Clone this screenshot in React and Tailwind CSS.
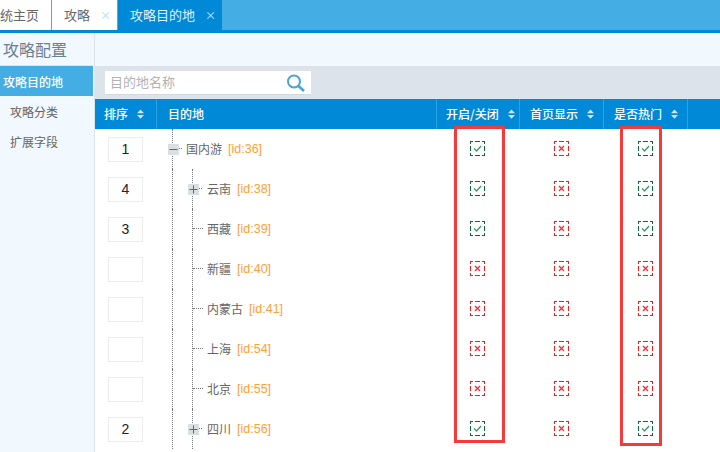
const font = { fontFamily: '"Noto Sans CJK SC", sans-serif' };

function Sort() {
  return (
    <svg width="9" height="10" viewBox="0 0 9 10" className="shrink-0" fill="#cde7f8">
      <path d="M4.5 0.5 L8 4.2 H1 Z" />
      <path d="M4.5 9.8 L8 6 H1 Z" />
    </svg>
  );
}

function Check({ on }) {
  const c = on ? "#0a6b3a" : "#f01c1c";
  return (
    <svg width="15" height="15" viewBox="0 0 15 15" fill="none" className="block -translate-y-px">
      <path
        shapeRendering="crispEdges"
        stroke={c}
        d="M0.5 3 V0.5 H3 M5 0.5 H10 M12 0.5 H14.5 V3 M14.5 5 V10 M14.5 12 V14.5 H12 M10 14.5 H5 M3 14.5 H0.5 V12 M0.5 10 V5"
      />
      {on ? (
        <path d="M4 7.5 L6.5 10 L11 5" stroke="#3f9a68" strokeWidth="1.3" />
      ) : (
        <path d="M5 5 L10 10 M10 5 L5 10" stroke="#f0303a" strokeWidth="1.4" />
      )}
    </svg>
  );
}

function Expander({ open }) {
  return (
    <span className="absolute top-[15px] -left-[5px] flex h-[11px] w-[11px] items-center justify-center bg-[#dcdfe2]">
      <svg width="9" height="9" viewBox="0 0 9 9" stroke="#666" fill="none">
        <path d="M0.5 4.5 H8.5" />
        {!open && <path d="M4.5 0.5 V8.5" />}
      </svg>
    </span>
  );
}

const rows = [
  { o: "1", n: "国内游", id: 36, a: true, c: true, lvl: 0, exp: "open" },
  { o: "4", n: "云南", id: 38, a: true, c: true, lvl: 1, exp: "closed" },
  { o: "3", n: "西藏", id: 39, a: true, c: true, lvl: 1 },
  { o: "", n: "新疆", id: 40, a: false, c: false, lvl: 1 },
  { o: "", n: "内蒙古", id: 41, a: false, c: false, lvl: 1 },
  { o: "", n: "上海", id: 54, a: false, c: false, lvl: 1 },
  { o: "", n: "北京", id: 55, a: false, c: false, lvl: 1 },
  { o: "2", n: "四川", id: 56, a: true, c: true, lvl: 1, exp: "closed" },
];

const gridCols = "grid grid-cols-[62px_280px_83px_84px_84px_1fr]";

function Head({ label, pad, gapCls }) {
  return (
    <div className={`flex h-full items-center border-r border-[#2ba0e2] ${pad} ${gapCls}`}>
      <span className="font-medium">{label}</span>
      <Sort />
    </div>
  );
}

function Row({ r }) {
  return (
    <div className={`${gridCols} h-10`}>
      <div className="flex items-center pl-[13px]">
        <div className="flex h-[25px] w-[35px] items-center justify-center border border-[#ececec] bg-white text-[14px] text-[#222]" style={{ fontFamily: '"Liberation Sans", sans-serif' }}>
          {r.o}
        </div>
      </div>
      <div className="flex h-10 pl-[15px]">
        <div className="relative h-10 w-5 shrink-0 border-l border-dotted border-[#777]">
          {r.lvl === 0 && r.exp && <Expander open />}
          {r.lvl === 0 && <span className="absolute top-[19px] left-[6px] w-[3px] border-t border-dotted border-[#777]" />}
        </div>
        {r.lvl === 1 && (
          <div className="relative h-10 w-[15px] shrink-0 border-l border-dotted border-[#777]">
            {r.exp && <Expander />}
            <span className={`absolute top-[19px] border-t border-dotted border-[#777] ${r.exp ? "left-[6px] w-[3px]" : "left-0 w-[10px]"}`} />
          </div>
        )}
        <div className={`flex h-10 items-center text-xs text-[#666] ${r.lvl === 0 ? "-ml-[6px]" : ""}`}>
          <span>{r.n}</span>
          <span className="ml-[6px] text-[12.5px] text-[#ff9e36]" style={{ fontFamily: '"Liberation Sans", sans-serif' }}>[id:{r.id}]</span>
        </div>
      </div>
      <div className="flex items-center justify-center pr-[3px]"><Check on={r.a} /></div>
      <div className="flex items-center justify-center pr-[2px]"><Check on={false} /></div>
      <div className="flex items-center justify-center pr-[2px]"><Check on={r.c} /></div>
      <div />
    </div>
  );
}

export default function App() {
  return (
    <div className="flex h-[452px] w-[720px] flex-col overflow-hidden bg-white" style={font}>
      <div className="flex h-[30px] shrink-0 bg-[#44ade3] text-[13px]">
        <div className="flex w-[52px] items-center justify-end border-r border-[#44ade3] bg-white pr-[12px] text-[#666]">统主页</div>
        <div className="flex w-[66px] items-center border-r border-[#44ade3] bg-white pl-[12px] text-[#666]">
          <span>攻略</span>
          <span className="ml-[10px] text-[11px] text-[#a9d8f2]">×</span>
        </div>
        <div className="flex w-[104px] items-center bg-[#0089d6] pl-[12px] text-[#dff2ff]">
          <span>攻略目的地</span>
          <span className="ml-[10px] text-[11px] text-[#d5edfb]">×</span>
        </div>
      </div>
      <div className="h-[3px] shrink-0 bg-[#0089d6]" />
      <div className="flex min-h-0 flex-1">
        <aside className="flex w-[95px] shrink-0 flex-col border-r border-[#dbe5ee] bg-[#f1f8fe]">
          <div className="flex h-[33px] items-center border-b border-[#dbe5ee] pl-[3px] text-base text-[#6d7f93]">攻略配置</div>
          <div className="flex h-[30px] w-[93px] items-center bg-[#44ade3] pt-[1px] pl-[3px] text-xs font-medium text-white">攻略目的地</div>
          <div className="flex h-[30px] items-center pt-[2px] pl-[10px] text-xs text-[#666]">攻略分类</div>
          <div className="flex h-[30px] items-center pt-[2px] pl-[10px] text-xs text-[#666]">扩展字段</div>
        </aside>
        <main className="flex min-w-0 flex-1 flex-col">
          <div className="h-[33px] shrink-0 bg-[#f1f8fe]" />
          <div className="flex h-[33px] shrink-0 items-center bg-[#dde3ea] pl-[10px]">
            <div className="flex h-[24px] w-[206px] items-center justify-between border-b border-[#d3d8de] bg-white pr-[6px] pl-[5px] text-[13px] text-[#b3b3b3]">
              <span>目的地名称</span>
              <svg width="19" height="18" viewBox="0 0 19 18" fill="none" stroke="#4ba3d9" strokeWidth="2" className="translate-y-[1px]">
                <circle cx="8" cy="7.5" r="6" />
                <path d="M12.5 12 L18 17" strokeWidth="2.6" />
              </svg>
            </div>
          </div>
          <div className="relative min-h-0 flex-1">
            <div className={`${gridCols} h-[30px] items-center bg-[#0089d6] text-xs text-white`}>
              <Head label="排序" pad="pl-[9px]" gapCls="gap-[8px]" />
              <div className="flex h-full items-center border-r border-[#2ba0e2] pl-[11px] font-medium">目的地</div>
              <Head label="开启/关闭" pad="pl-[9px]" gapCls="gap-[8px]" />
              <Head label="首页显示" pad="pl-[10px]" gapCls="gap-[8px]" />
              <Head label="是否热门" pad="pl-[10px]" gapCls="gap-[8px]" />
              <div />
            </div>
            {rows.map((r) => (
              <Row key={r.id} r={r} />
            ))}
            <div className="absolute top-[27px] left-[359px] h-[317px] w-[51px] border-[3px] border-[#f53a3a]" />
            <div className="absolute top-[27px] left-[525px] h-[320px] w-[42px] border-[3px] border-[#f53a3a]" />
          </div>
        </main>
      </div>
    </div>
  );
}
